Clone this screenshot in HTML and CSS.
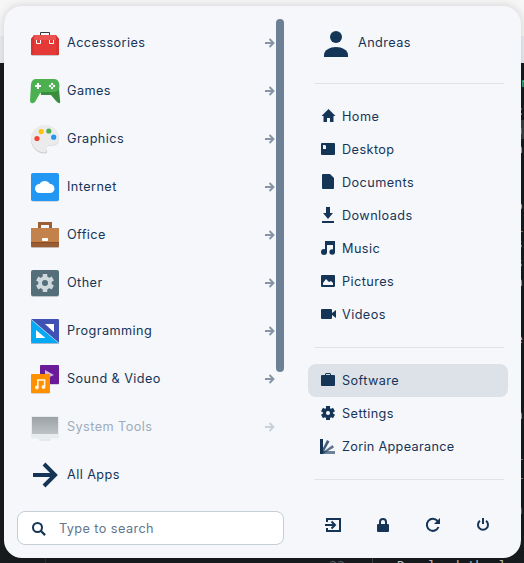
FILE: index.html
```html
<!DOCTYPE html>
<html lang="en">
<head>
<meta charset="utf-8">
<title>Applications menu</title>
<link rel="stylesheet" href="styles.css">
</head>
<body>
<div class="backdrop">
  <div class="toolbar"></div><div class="tabs"></div>
  <div class="editor">
    <div class="tail first green">r</div><div class="tail second">c</div>
    <div class="tail active blue">a</div><div class="tail">a</div><div class="tail"></div><div class="tail"></div>
    <div class="tail">o</div><div class="tail">_</div><div class="tail">s</div><div class="tail">s</div><div class="tail">n</div>
    <div class="tail"></div><div class="tail"></div><div class="tail">e</div><div class="tail"></div><div class="tail"></div><div class="tail"></div>
    <div class="tail">n</div><div class="tail"></div><div class="tail">_</div><div class="tail">_</div><div class="tail"></div><div class="tail blue">n</div><div class="tail"></div><div class="tail"></div>
    <div class="code"><span class="margin"></span><span class="number">22</span><span class="source">Download the l</span></div>
  </div>
</div>
<main class="panel">
  <section class="left">
    <ul class="apps">
      <li><svg class="app" viewBox="0 0 32 32"><path d="M11.5 9V5.5h9V9" fill="none" stroke="#333940"/><path d="M4 28.8h24a2 2 0 0 0 2-1V12l-3-4H5l-3 4v15.8a2 2 0 0 0 2 1z" fill="#b9b9bd"/><path d="M2 12l3-4h22l3 4v15q0 1-1 1H3q-1 0-1-1z" fill="#e53935"/><path d="M3 13l3-5h20l3 5z" fill="#ea5350"/><path d="M2 12l3-3v19H3q-1 0-1-1zM30 12l-3-3v19h2q1 0 1-1z" fill="#d93431"/><path d="M7.500 13v3.500h4V13M20.500 13v3.500h4V13" fill="none" stroke="#fff"/></svg><span>Accessories</span><svg class="go" viewBox="0 0 10 10"><path d="M0 5h8M4.500 1l4 4-4 4"/></svg></li>
      <li><svg class="app" viewBox="0 0 32 32"><path d="M11 14h19l1 11q1 6-4 1l-5-6H12z" fill="#388e3c"/><path d="M7 4h18q4 0 5 4l.5 3q0 6-6 6H13q-2 0-3 3l-4 7q-4 3-5-1L2 9q1-5 5-5z" fill="#4caf50"/><path d="M6 11h6M9 8v6" stroke="#fff" stroke-width="2"/><g fill="#fff"><circle cx="23" cy="9" r="1.200"/><circle cx="21" cy="11" r="1.200"/><circle cx="25" cy="11" r="1.200"/><circle cx="23" cy="13" r="1.200"/></g></svg><span>Games</span><svg class="go" viewBox="0 0 10 10"><path d="M0 5h8M4.500 1l4 4-4 4"/></svg></li>
      <li><svg class="app" viewBox="0 0 32 32"><path d="M16 3C8 3 2 9 2 17c0 7 6 13.500 14 13.500 4 0 1-4 1-5 0-3 4-3 7-3 4 0 6-3 6-7C30 8 24 3 16 3z" fill="#c9c9c9"/><path d="M16 2C8 2 2 8 2 16c0 7 6 13.500 14 13.500 3 0 0-3 1-5 1-2 4-2.500 7-2.500 4 0 6-3 6-7C30 7 24 2 16 2z" fill="#ebebeb"/><circle cx="8" cy="15.500" r="2.600" fill="#f44336"/><circle cx="12.200" cy="8.600" r="2.600" fill="#ffc107"/><circle cx="19.800" cy="8" r="2.600" fill="#4caf50"/><circle cx="24.700" cy="14.200" r="2.600" fill="#2196f3"/></svg><span>Graphics</span><svg class="go" viewBox="0 0 10 10"><path d="M0 5h8M4.500 1l4 4-4 4"/></svg></li>
      <li><svg class="app" viewBox="0 0 32 32"><rect x="2" y="3" width="28" height="27.600" rx="2" fill="#b5bdc8"/><rect x="2" y="2" width="28" height="28" rx="2" fill="#2196f3"/><path d="M10.500 22a4.500 4.500 0 0 1 0-9 6 6 0 0 1 10.500 0 4.500 4.500 0 0 1 0 9z" fill="#fff"/></svg><span>Internet</span><svg class="go" viewBox="0 0 10 10"><path d="M0 5h8M4.500 1l4 4-4 4"/></svg></li>
      <li><svg class="app" viewBox="0 0 32 32"><path d="M10.500 10V4.500h11V10" fill="none" stroke="#9a5f35" stroke-width="3"/><rect x="2" y="10" width="28" height="18.800" rx="1" fill="#b5a69b"/><rect x="2" y="9" width="28" height="19" rx="1" fill="#9a5c32"/><rect x="2" y="9" width="28" height="15" rx="1" fill="#c3814b"/><path d="M2 23.500h28" stroke="#8a4d2a"/><rect x="13" y="19" width="6" height="3" rx=".7" fill="#fff"/></svg><span>Office</span><svg class="go" viewBox="0 0 10 10"><path d="M0 5h8M4.500 1l4 4-4 4"/></svg></li>
      <li><svg class="app" viewBox="0 0 32 32"><rect x="2" y="4" width="28" height="25.700" rx="2" fill="#adb7bc"/><rect x="2" y="3" width="28" height="26" rx="2" fill="#546e7a"/><g stroke="#cfd8dc" stroke-width="4.500"><path d="M16 7v18M8.200 11.500l15.600 9M8.200 20.500l15.600-9"/></g><circle cx="16" cy="16" r="6.800" fill="#cfd8dc"/><circle cx="16" cy="16" r="3" fill="#546e7a"/></svg><span>Other</span><svg class="go" viewBox="0 0 10 10"><path d="M0 5h8M4.500 1l4 4-4 4"/></svg></li>
      <li><svg class="app" viewBox="0 0 32 32"><path d="M2 28.500h28" stroke="#a8b8cc"/><path d="M2 4h27q1 0 1 1v23z" fill="#3f51b5"/><path d="M2 4.500L29.500 28H3q-1 0-1-1z" fill="#03a9f4"/><path d="M2 4.300l28 24" stroke="#a8c5e8" stroke-width=".6"/><path d="M16 9h9v8.300zM7 15v8h9.500z" fill="#fff"/></svg><span>Programming</span><svg class="go" viewBox="0 0 10 10"><path d="M0 5h8M4.500 1l4 4-4 4"/></svg></li>
      <li><svg class="app" viewBox="0 0 32 32"><rect x="11" y="2.600" width="19" height="19" rx="1" fill="#b8a8c5"/><rect x="11" y="2" width="19" height="19" rx="1" fill="#6a1b9a"/><path d="M16 7v9l9-4z" fill="#d1b6df"/><rect x="2" y="11.600" width="19" height="19" rx="1" fill="#c9b195"/><rect x="2" y="11" width="19" height="19" rx="1" fill="#ff9100"/><path d="M8.800 24.500V17h6.800v7" fill="none" stroke="#fff3df" stroke-width="1.600"/><circle cx="7.900" cy="24.500" r="1.900" fill="#fff3df"/><circle cx="14.500" cy="24" r="1.900" fill="#fff3df"/></svg><span>Sound &amp; Video</span><svg class="go" viewBox="0 0 10 10"><path d="M0 5h8M4.500 1l4 4-4 4"/></svg></li>
      <li class="faded"><svg class="app" viewBox="0 0 32 32"><defs><linearGradient id="screen" x2="0" y2="1"><stop stop-color="#9da2a6"/><stop offset="1" stop-color="#bdc2c5"/></linearGradient></defs><rect x="2" y="5" width="28" height="22.500" rx="1" fill="#e8ecef"/><rect x="3" y="6" width="26" height="17" fill="url(#screen)"/><path d="M10 27.500h12V29a1 1 0 0 1-1 1H11a1 1 0 0 1-1-1z" fill="#e6eaed"/></svg><span>System Tools</span><svg class="go" viewBox="0 0 10 10"><path d="M0 5h8M4.500 1l4 4-4 4"/></svg></li>
      <li><svg class="app" viewBox="0 0 32 32"><path d="M4 16h21M15 5l11 11-11 11" fill="none" stroke="#153557" stroke-width="4"/></svg><span>All Apps</span></li>
    </ul>
    <div class="scrollbar"></div>
    <label class="search"><svg viewBox="0 0 16 16"><circle cx="6.500" cy="6.500" r="4.500" fill="none" stroke="#153557" stroke-width="2"/><path d="M9.700 9.700l4.400 4.400" stroke="#153557" stroke-width="2.200"/></svg><span>Type to search</span></label>
  </section>
  <section class="right">
    <div class="user"><svg viewBox="0 0 24 26"><circle cx="12" cy="6" r="6"/><path d="M0 26v-2c0-5 6-8 12-8s12 3 12 8v2z"/></svg><span>Andreas</span></div>
    <hr>
    <ul class="places">
      <li><svg viewBox="0 0 16 16"><path d="M8.500 1l7 7h-2v6H10v-4H7v4H3.500V8h-2z"/></svg>Home</li>
      <li><svg viewBox="0 0 16 16"><path fill-rule="evenodd" d="M2 2h12q1 0 1 1v10q0 1-1 1H2q-1 0-1-1V3q0-1 1-1zM3 4v4h3V5L5 4z"/></svg>Desktop</li>
      <li><svg viewBox="0 0 16 16"><path d="M3 0h7l4 4v10q0 1-1 1H3q-1 0-1-1V1q0-1 1-1z"/></svg>Documents</li>
      <li><svg viewBox="0 0 16 16"><path d="M6 0h4v6h3l-5 6-5-6h3zM2 14h12v2H2z"/></svg>Downloads</li>
      <li><svg viewBox="0 0 16 16"><path d="M5 1h10v11h-2V5H7v8H5z"/><path d="M5 1h10v4H5z"/><circle cx="4" cy="12" r="3"/><circle cx="12.200" cy="12" r="2.800"/></svg>Music</li>
      <li><svg viewBox="0 0 16 16"><path fill-rule="evenodd" d="M2 2h12q1 0 1 1v10q0 1-1 1H2q-1 0-1-1V3q0-1 1-1zM3 12h10v-2l-2-2-2 1-3-3-3 4z"/></svg>Pictures</li>
      <li><svg viewBox="0 0 16 16"><path d="M2 3h9q1 0 1 1v3l4-3v8l-4-3v3q0 1-1 1H2q-1 0-1-1V4q0-1 1-1z"/></svg>Videos</li>
    </ul>
    <hr>
    <ul class="places">
      <li class="selected"><svg viewBox="0 0 16 16"><path fill-rule="evenodd" d="M5 3V2l1-1h4l1 1v1h3q1 0 1 1v9q0 1-1 1H2q-1 0-1-1V4q0-1 1-1zm1 0h4V2H6z"/></svg>Software</li>
      <li><svg viewBox="0 0 16 16"><path d="M8 1v14M2 4.500l12 7M2 11.500l12-7" stroke="#153557" stroke-width="4"/><circle cx="8" cy="8" r="5.200"/><circle class="hole" cx="8" cy="8" r="2"/></svg>Settings</li>
      <li><svg viewBox="0 0 16 16"><path d="M0 1h3v15H0z"/><path opacity=".78" d="M3 10l4-8 2.500 1.400L3 15z"/><path opacity=".68" d="M3 14l9.500-7L14 9.500 3 16z"/><path opacity=".6" d="M3 13h12v3H3z"/></svg><span class="tight">Zorin Appearance</span></li>
    </ul>
    <hr>
    <nav class="session">
      <svg viewBox="0 0 16 16"><path fill="none" stroke="#153557" stroke-width="2" d="M2 5V2h13v12H2v-3M0 8h10M6.500 4.500L10 8l-3.500 3.500"/></svg>
      <svg viewBox="0 0 16 16"><path d="M3 7h10q1 0 1 1v6q0 1-1 1H3q-1 0-1-1V8q0-1 1-1z"/><path d="M5 8V5a3 3 0 0 1 6 0v3" fill="none" stroke="#153557" stroke-width="2"/></svg>
      <svg viewBox="0 0 16 16"><path d="M13.500 10A6 6 0 1 1 12.500 4" fill="none" stroke="#153557" stroke-width="2"/><path d="M15 1v6H9z"/></svg>
      <svg viewBox="0 0 16 16"><path d="M5 3.800a5 5 0 1 0 6 0M8 1v6" fill="none" stroke="#153557" stroke-width="2"/></svg>
    </nav>
  </section>
</main>
</body>
</html>
```
FILE: styles.css
```css
* { box-sizing: border-box; }
body { margin: 0; width: 524px; height: 563px; overflow: hidden; font: 12.7px/20px Inter, sans-serif; letter-spacing: .42px; color: #153557; }
ul { list-style: none; margin: 0; padding: 0; }
svg { display: block; flex: none; fill: #153557; }

.backdrop { position: absolute; inset: 0; overflow: hidden; background: #171b1e; }
.toolbar { height: 36px; background: #f6f6f6; }
.tabs { height: 27px; background: #e9edf1; }
.editor { padding-top: 10px; color: #bfc3c6; font: 13px/19px "DejaVu Sans Mono", monospace; letter-spacing: 0; }
.tail { height: 19px; padding-left: 515px; white-space: nowrap; }
.tail.first { height: 28px; padding-left: 520px; }
.tail.green { color: #55c98b; }
.tail.blue { color: #4b91cf; }
.tail.active { background: linear-gradient(90deg, transparent 50%, #3b3e42 50%); }
.code { display: flex; height: 19px; line-height: 17px; }
.margin { width: 46px; border-right: 1px solid #2b3033; }
.number { width: 327px; padding-right: 27px; text-align: right; color: #59616a; border-right: 1px solid #3c4145; }
.source { padding-left: 24px; white-space: pre; }

.panel { position: relative; display: flex; justify-content: space-between; width: 517px; height: 552px; margin: 6px 0 0 4px; padding: 13px; border-radius: 18px; background: #f5f7fb; box-shadow: 0 0 10px rgba(0, 0, 0, .16); }
.left { position: relative; width: 267px; }
.apps li { display: flex; align-items: center; height: 48px; padding: 0 9px 0 12px; }
.app { width: 32px; height: 32px; margin-right: 6px; }
.apps span { flex: 1; }
.go { width: 10px; height: 10px; fill: none; stroke: #8495a8; stroke-width: 1.9; }
.faded span { color: #9dacbb; }
.faded .go { stroke: #c8d0d9; }
.scrollbar { position: absolute; top: 0; right: 0; width: 8px; height: 353px; border-radius: 4px; background: #6c8196; }
.search { display: flex; align-items: center; height: 34px; margin-top: 12px; padding-left: 13px; gap: 12px; border: 1px solid #c5cdd5; border-radius: 8px; background: #fff; color: #5f768e; }
.search svg { width: 16px; height: 16px; margin-top: 1px; }
.search span { padding-top: 2px; }

.right { width: 200px; }
.user { display: flex; align-items: center; height: 48px; padding: 0 0 0 16px; gap: 10px; }
.user svg { width: 24px; height: 26px; margin-top: 2px; }
hr { height: 1px; margin: 16px 4px 16px 6px; border: 0; background: #e0e4e9; }
.places li { display: flex; align-items: center; height: 33px; padding: 0 0 0 12px; gap: 6px; border-radius: 8px; }
.places svg { width: 16px; height: 16px; margin-bottom: 1px; }
.tight { letter-spacing: .3px; }
.places .selected { background: #dde2e9; }
.hole { fill: #f5f7fb; }
.session { display: grid; grid-template-columns: repeat(4, 1fr); justify-items: center; padding-top: 21px; }
.session svg { width: 16px; height: 16px; }
```
